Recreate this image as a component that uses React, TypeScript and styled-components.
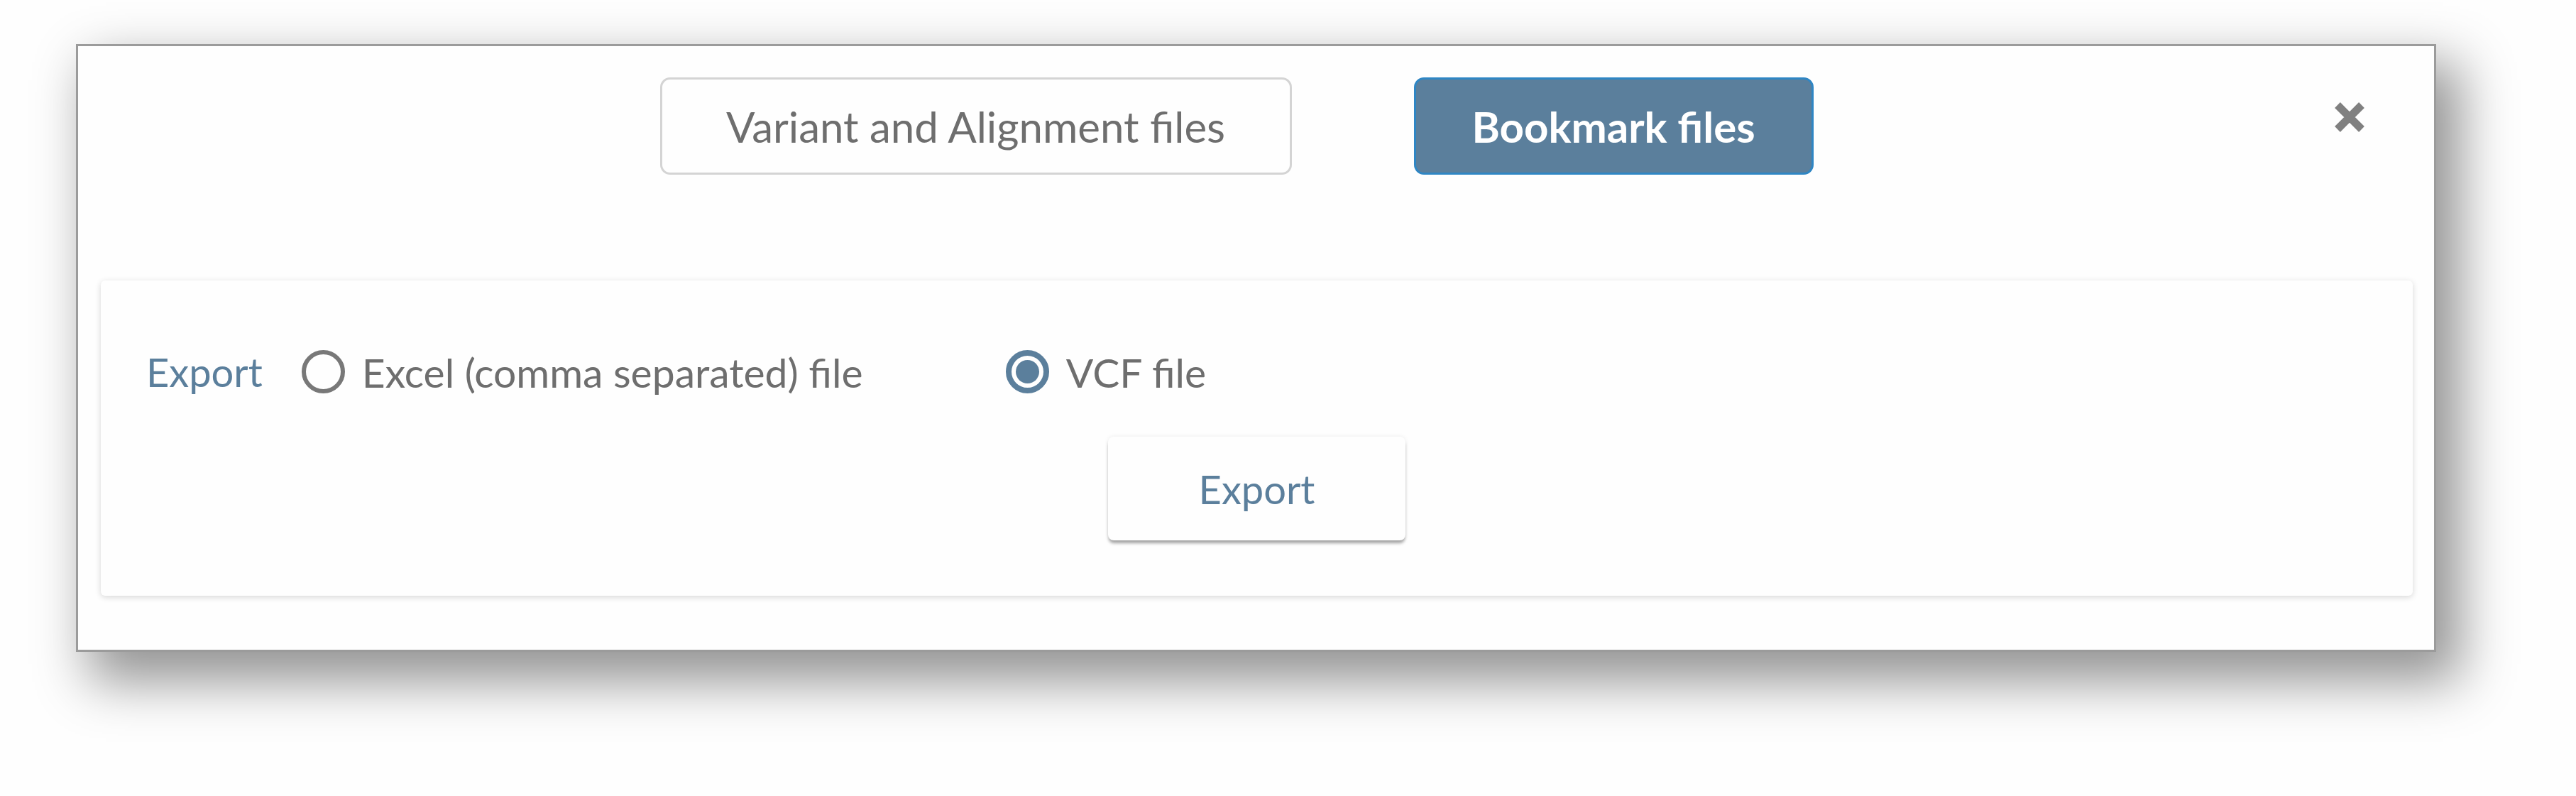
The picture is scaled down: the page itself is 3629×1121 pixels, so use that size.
import React, { useState } from 'react'
import styled, { createGlobalStyle } from 'styled-components'

const blue = '#5b7f9c'
const grey = '#6e6e6e'

const GlobalStyle = createGlobalStyle`
  html, body {
    margin: 0;
    background: #fefefe;
  }
  body {
    font-family: Lato, 'Open Sans', 'Liberation Sans', sans-serif;
  }
`

const Page = styled.div`
  box-sizing: border-box;
  height: 1121px;
  padding: 62px 0 0 107px;
  overflow: hidden;
`

const Dialog = styled.div`
  position: relative;
  box-sizing: border-box;
  width: 3325px;
  height: 856px;
  padding: 44px 30px 0 32px;
  display: flex;
  flex-direction: column;
  background: #fefefe;
  border: 3px solid #9b9b9b;
  box-shadow: 26px 34px 70px 8px rgba(0, 0, 0, 0.42);
`

const Tabs = styled.div`
  display: flex;
  justify-content: center;
  gap: 172px;
  padding-right: 57px;
  margin-bottom: 149px;
`

const Tab = styled.button<{ $active?: boolean; $width: number }>`
  box-sizing: border-box;
  width: ${p => p.$width}px;
  height: 137px;
  border-radius: 14px;
  border: 3px solid ${p => (p.$active ? '#2f86c4' : '#d4d4d4')};
  background: ${p => (p.$active ? blue : '#fefefe')};
  color: ${p => (p.$active ? '#ffffff' : grey)};
  font-family: inherit;
  font-size: 60px;
  font-weight: ${p => (p.$active ? 700 : 400)};
  cursor: pointer;
  padding: 0;
`

const Close = styled.button`
  position: absolute;
  top: 77px;
  right: 96px;
  width: 46px;
  height: 46px;
  padding: 0;
  border: none;
  background: none;
  cursor: pointer;
  svg {
    display: block;
  }
`

const Card = styled.div`
  box-sizing: border-box;
  height: 444px;
  padding: 98px 30px 0 30px;
  background: #fefefe;
  border-radius: 6px;
  box-shadow: 0 2px 8px rgba(0, 0, 0, 0.16);
`

const Row = styled.div`
  display: flex;
  align-items: center;
  height: 61px;
  padding-left: 34px;
`

const RowLabel = styled.span`
  color: ${blue};
  font-size: 56px;
  margin-right: 55px;
`

const Option = styled.label<{ $width?: number }>`
  display: flex;
  align-items: center;
  gap: 24px;
  width: ${p => (p.$width ? `${p.$width}px` : 'auto')};
  color: ${grey};
  font-size: 57px;
  cursor: pointer;
`

const Radio = styled.span<{ $checked: boolean }>`
  position: relative;
  box-sizing: border-box;
  flex: none;
  width: 61px;
  height: 61px;
  border-radius: 50%;
  border: ${p => (p.$checked ? `8px solid ${blue}` : '6px solid #787878')};
  background: #fefefe;

  &::after {
    content: '';
    display: ${p => (p.$checked ? 'block' : 'none')};
    position: absolute;
    inset: 6px;
    border-radius: 50%;
    background: ${blue};
  }
`

const Actions = styled.div`
  display: flex;
  justify-content: center;
  margin-top: 61px;
`

const ExportButton = styled.button`
  box-sizing: border-box;
  width: 419px;
  height: 146px;
  border: none;
  border-radius: 8px;
  background: #fefefe;
  color: ${blue};
  font-family: inherit;
  font-size: 56px;
  box-shadow: 0 5px 4px -1px rgba(0, 0, 0, 0.34), 0 0 6px rgba(0, 0, 0, 0.08);
  cursor: pointer;
`

const App = () => {
  const [tab, setTab] = useState('bookmark')
  const [format, setFormat] = useState('vcf')

  return (
    <Page>
      <GlobalStyle />
      <Dialog>
        <Tabs>
          <Tab $width={890} $active={tab === 'variant'} onClick={() => setTab('variant')}>
            Variant and Alignment files
          </Tab>
          <Tab $width={563} $active={tab === 'bookmark'} onClick={() => setTab('bookmark')}>
            Bookmark files
          </Tab>
        </Tabs>
        <Close aria-label="Close">
          <svg width="46" height="46" viewBox="0 0 46 46">
            <path d="M6 6 L40 40 M40 6 L6 40" stroke="#808080" strokeWidth="11" />
          </svg>
        </Close>
        <Card>
          <Row>
            <RowLabel>Export</RowLabel>
            <Option $width={992} onClick={() => setFormat('csv')}>
              <Radio $checked={format === 'csv'} />
              Excel (comma separated) file
            </Option>
            <Option onClick={() => setFormat('vcf')}>
              <Radio $checked={format === 'vcf'} />
              VCF file
            </Option>
          </Row>
          <Actions>
            <ExportButton>Export</ExportButton>
          </Actions>
        </Card>
      </Dialog>
    </Page>
  )
}

export default App
